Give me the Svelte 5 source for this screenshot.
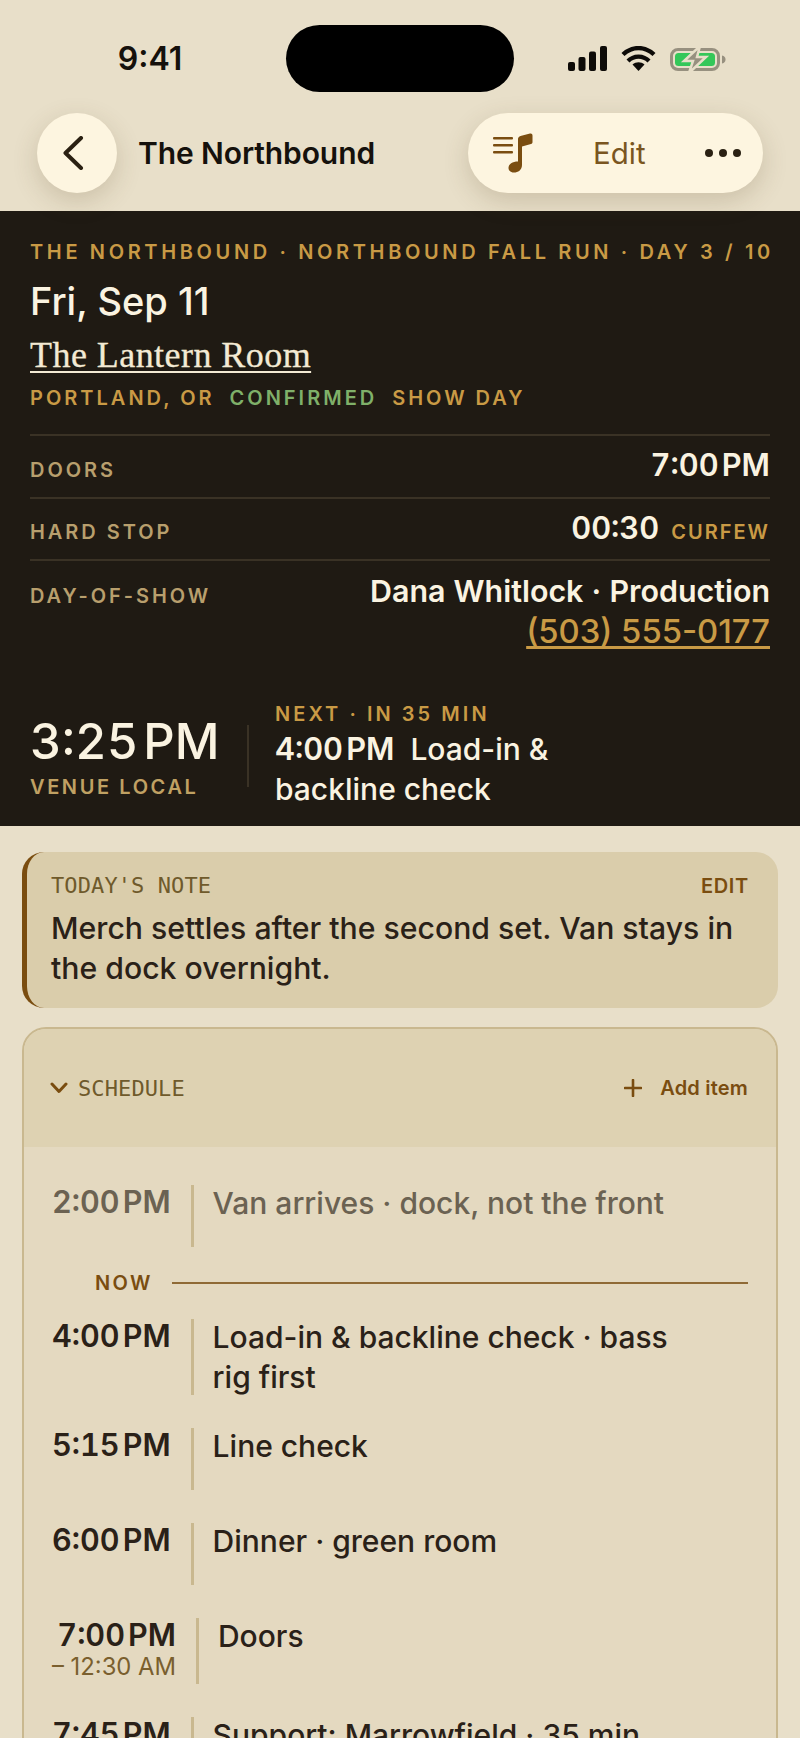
<script>
  const rows = [
    { t: '2:00', what: 'Van arrives · dock, not the front', past: true },
    { now: true },
    { t: '4:00', what: 'Load-in & backline check · bass rig first', two: true },
    { t: '5:15', what: 'Line check' },
    { t: '6:00', what: 'Dinner · green room' },
    { t: '7:00', what: 'Doors', sub: '– 12:30 AM' },
    { t: '7:45', what: 'Support: Marrowfield · 35 min' }
  ];
</script>

<div class="page">
  <header class="top">
    <div class="status">
      <div class="clock">9:41</div>
      <div class="island"></div>
      <div class="sys">
        <svg class="sig" width="39" height="25" viewBox="0 0 39 25"><rect x="0" y="16" width="7" height="9" rx="2"/><rect x="10.500" y="11" width="7" height="14" rx="2"/><rect x="21" y="5.500" width="7" height="19.500" rx="2"/><rect x="32" y="0" width="7" height="25" rx="2"/></svg>
        <svg class="wifi" width="35" height="25" viewBox="0 0 35 25"><path d="M17.500 25 L11.500 18.500 C15 15.500 20 15.500 23.500 18.500 Z"/><path d="M17.500 8.500 C12.500 8.500 8.500 10.500 5.500 13.500 L8.500 16.500 C13.500 11.500 21.500 11.500 26.500 16.500 L29.500 13.500 C26.500 10.500 22.500 8.500 17.500 8.500 Z"/><path d="M17.500 0 C10.800 0 4.800 2.700 0.500 7 L3.500 10 C11.500 2.400 23.500 2.400 31.500 10 L34.500 7 C30.200 2.700 24.200 0 17.500 0 Z"/></svg>
        <svg class="batt" width="56" height="27" viewBox="0 0 56 27"><rect x="1.500" y="3.500" width="47" height="20" rx="6.500" fill="none" stroke="#97907f" stroke-width="3"/><path d="M52 9.500 C54.500 10 55.500 11.500 55.500 13.500 C55.500 15.500 54.500 17 52 17.500 Z" fill="#97907f"/><rect x="5" y="7" width="40" height="13" rx="3.500" fill="#34c759"/><path d="M30 0 L14 15 H23 L19 27 L36 11 H27 Z" fill="#97907f" stroke="#e8dfc9" stroke-width="2.500"/></svg>
      </div>
    </div>
    <nav class="nav">
      <button class="round" aria-label="Back">
        <svg width="22" height="34" viewBox="0 0 22 34"><path d="M19 2 L3.500 17 L19 32" fill="none" stroke="#2a2012" stroke-width="4" stroke-linecap="round" stroke-linejoin="round"/></svg>
      </button>
      <div class="title">The Northbound</div>
      <div class="pill">
        <svg class="music" width="40" height="40" viewBox="0 0 40 40"><g fill="#7a4d10"><rect x="0" y="4" width="20" height="2.600" rx="1"/><rect x="0" y="11" width="20" height="2.600" rx="1"/><rect x="0" y="18" width="20" height="2.600" rx="1"/><path d="M25 6 C25 4.500 26 3.500 27.500 3 L37 0.500 C38.500 0.100 39.500 1 39.500 2.500 V9 C39.500 10 39 10.700 38 11 L29 13.500 V32 C29 37 25 39.500 21 39.500 C17 39.500 15.500 37 15.500 35 C15.500 31 19.500 28.500 25 28.500 Z"/></g></svg>
        <span class="edit">Edit</span>
        <span class="dots"><i></i><i></i><i></i></span>
      </div>
    </nav>
  </header>

  <section class="dark">
    <div class="eyebrow">THE NORTHBOUND · NORTHBOUND FALL RUN · DAY 3 / 10</div>
    <h1>Fri, Sep 11</h1>
    <div class="venue">The Lantern Room</div>
    <div class="meta"><span>PORTLAND, OR</span><span class="green">CONFIRMED</span><span>SHOW DAY</span></div>

    <div class="kv">
      <span class="k">DOORS</span>
      <span class="v">7:00<span class="ap">PM</span></span>
    </div>
    <div class="kv">
      <span class="k">HARD STOP</span>
      <span class="v">00:30<span class="cur">CURFEW</span></span>
    </div>
    <div class="kv last">
      <span class="k">DAY-OF-SHOW</span>
      <span class="contact"><span class="v">Dana Whitlock · Production</span><span class="phone">(503) 555-0177</span></span>
    </div>

    <div class="clockrow">
      <div class="local">
        <div class="big">3:25<span class="apb">PM</span></div>
        <div class="k2">VENUE LOCAL</div>
      </div>
      <div class="vr"></div>
      <div class="next">
        <div class="nlabel">NEXT · IN 35 MIN</div>
        <div class="ntext"><span class="nt">4:00<span class="ap">PM</span></span><span class="nsp"></span>Load-in &amp; backline check</div>
      </div>
    </div>
  </section>

  <main class="content">
    <section class="note">
      <div class="nhead"><span class="mono">TODAY'S NOTE</span><span class="nedit">EDIT</span></div>
      <p>Merch settles after the second set. Van stays in the dock overnight.</p>
    </section>

    <section class="sched">
      <div class="shead">
        <span class="sleft">
          <svg width="18" height="12" viewBox="0 0 18 12"><path d="M2 2 L9 9.500 L16 2" fill="none" stroke="#7a4d10" stroke-width="3" stroke-linecap="round" stroke-linejoin="round"/></svg>
          <span class="mono">SCHEDULE</span>
        </span>
        <span class="sright">
          <svg width="18" height="18" viewBox="0 0 18 18"><path d="M9 1 V17 M1 9 H17" stroke="#7a4d10" stroke-width="2.600" stroke-linecap="round"/></svg>
          <span>Add item</span>
        </span>
      </div>
      <div class="sbody">
        {#each rows as r}
          {#if r.now}
            <div class="nowrow"><span class="nowl">NOW</span><span class="nowline"></span></div>
          {:else}
            <div class="row" class:past={r.past}>
              <div class="when">
                <div class="tm">{r.t}<span class="ap">PM</span></div>
                {#if r.sub}<div class="sub">{r.sub}</div>{/if}
              </div>
              <div class="what" class:two={r.two} class:tall={r.sub}><span class="wt">{r.what}</span></div>
            </div>
          {/if}
        {/each}
      </div>
    </section>
  </main>
</div>

<style>
  :global(body) { margin: 0; background: #e8dfc9; }
  .page {
    width: 800px;
    height: 1738px;
    overflow: hidden;
    background: #e8dfc9;
    font-family: Inter, "Liberation Sans", sans-serif;
    color: #2a2118;
  }
  .top { height: 211px; box-sizing: border-box; }
  .status {
    display: grid;
    grid-template-columns: 286px 228px 1fr;
    padding-top: 25px;
    height: 88px;
  }
  .clock {
    font-size: 32px;
    font-weight: 600;
    line-height: 68px;
    text-align: center;
    padding-left: 14px;
    color: #15110c;
  }
  .island { height: 67px; background: #000; border-radius: 34px; }
  .sys { display: flex; align-items: flex-start; padding: 21px 0 0 54px; }
  .sig, .wifi { fill: #0d0b08; }
  .wifi { margin-left: 14px; }
  .batt { margin-left: 14px; }

  .nav { display: flex; align-items: center; padding-left: 37px; height: 80px; }
  .round {
    width: 80px; height: 80px;
    border: 0; border-radius: 50%;
    padding: 0;
    background: #fdf5e0;
    box-shadow: 0 8px 26px rgba(90, 70, 35, .2);
    display: flex; align-items: center; justify-content: center;
  }
  .round svg { margin-right: 8px; }
  .title { margin-left: 21px; font-size: 30px; font-weight: 600; color: #15110c; flex: 1; letter-spacing: -0.1px; }
  .pill {
    width: 295px; height: 80px;
    margin-right: 37px;
    border-radius: 40px;
    background: #fdf5e0;
    box-shadow: 0 8px 26px rgba(90, 70, 35, .2);
    display: flex; align-items: center;
    box-sizing: border-box;
    padding-left: 25px;
  }
  .edit { margin-left: 60px; font-size: 29.500px; color: #7a5520; font-weight: 400; }
  .dots { margin-left: 59px; display: flex; gap: 6px; }
  .dots i { width: 8px; height: 8px; border-radius: 50%; background: #2a2012; display: block; }

  .dark { background: #1f1a13; height: 615px; box-sizing: border-box; padding: 29px 30px 0; }
  .eyebrow {
    font-size: 20px; font-weight: 600; line-height: 24px;
    letter-spacing: 3.640px; color: #c99a45; white-space: nowrap;
  }
  h1 { margin: 14px 0 0; font-size: 38px; font-weight: 500; line-height: 46px; color: #faf3e1; }
  .venue {
    margin-top: 11px;
    font-family: "Liberation Serif", serif;
    font-size: 36px; line-height: 40px; letter-spacing: 0.450px; color: #f3ead4;
    text-decoration: underline; text-decoration-thickness: 2px; text-underline-offset: 4px;
    font-weight: 400;
    -webkit-text-stroke: 0.3px #f3ead4;
  }
  .meta {
    display: flex; gap: 15px; margin-top: 11px;
    font-size: 20px; font-weight: 600; line-height: 24px; letter-spacing: 3px; color: #c99a45;
  }
  .green { color: #7fb069; }
  .kv {
    border-top: 2px solid #3a3225;
    height: 62.500px; box-sizing: border-box;
    display: flex; justify-content: space-between; align-items: center;
  }
  .meta + .kv { margin-top: 24px; }
  .k { font-size: 20px; font-weight: 600; letter-spacing: 2.950px; color: #b89f6d; padding-top: 7px; }
  .v { font-size: 30.800px; font-weight: 600; color: #faf3e1; padding-bottom: 3px; font-variant-numeric: tabular-nums; }
  .ap { margin-left: 0.1em; }
  .cur { font-size: 20px; letter-spacing: 2px; color: #c99a45; margin-left: 12px; }
  .kv.last { height: auto; align-items: flex-start; padding-top: 10px; }
  .kv.last .k { padding-top: 13px; }
  .contact { display: flex; flex-direction: column; align-items: flex-end; }
  .contact .v { line-height: 40px; font-size: 30.400px; padding: 0; }
  .phone { font-size: 32.800px; font-weight: 500; line-height: 41px; color: #c99a45; text-decoration: underline; text-decoration-thickness: 3px; text-underline-offset: 3px; }

  .clockrow { display: flex; align-items: center; margin-top: 50px; }
  .local { width: 217px; }
  .big { font-size: 49px; font-weight: 500; line-height: 60px; color: #faf3e1; white-space: nowrap; font-variant-numeric: tabular-nums; }
  .apb { margin-left: 0.1em; }
  .k2 { margin-top: 3px; font-size: 20px; font-weight: 600; line-height: 24px; letter-spacing: 2.600px; color: #c0a163; }
  .vr { width: 2px; height: 62px; background: #3a3225; }
  .next { margin-left: 26px; }
  .nlabel { font-size: 20px; font-weight: 600; line-height: 24px; letter-spacing: 3.050px; color: #c99a45; }
  .ntext { margin-top: 3px; width: 340px; font-size: 30px; font-weight: 500; line-height: 40px; color: #faf3e1; }
  .nt { font-size: 30.800px; font-weight: 600; font-variant-numeric: tabular-nums; }
  .nsp { display: inline-block; width: 16px; }

  .content { padding: 26px 22px 0; }
  .note {
    height: 156px; box-sizing: border-box;
    background: #dacdab;
    border-left: 5px solid #7a4d10;
    border-radius: 22px;
    padding: 22px 29px 0 24px;
  }
  .nhead { display: flex; justify-content: space-between; align-items: center; line-height: 24px; }
  .mono { font-family: "DejaVu Sans Mono", monospace; font-size: 22px; color: #6f5a2b; letter-spacing: 0.100px; }
  .nedit { font-size: 20px; font-weight: 600; letter-spacing: 0.700px; color: #7a4d10; }
  .note p { margin: 10px 0 0; font-size: 30.200px; font-weight: 500; line-height: 40px; color: #2a2118; }

  .sched {
    margin-top: 19px;
    border: 2px solid #c9b88f;
    border-radius: 24px;
    background: #e4d9c0;
    overflow: hidden;
  }
  .shead {
    height: 118px;
    background: #ded2b2;
    display: flex; align-items: center; justify-content: space-between;
    padding: 0 28px 0 26px;
  }
  .sleft { display: flex; align-items: center; gap: 10px; }
  .sright { display: flex; align-items: center; gap: 18px; font-size: 20px; font-weight: 600; letter-spacing: 0.200px; color: #7a4d10; }
  .sbody { padding: 38px 28px 60px; }
  .row { display: flex; margin-bottom: 33px; }
  .when { min-width: 118px; text-align: right; flex: none; }
  .tm { font-size: 30.600px; font-weight: 600; line-height: 40px; margin-top: -3px; white-space: nowrap; color: #2a2118; font-variant-numeric: tabular-nums; }
  .sub { font-size: 23.800px; line-height: 24px; color: #7a5f2e; white-space: nowrap; }
  .what {
    margin-left: 20px;
    border-left: 3px solid #c9b88f;
    padding-left: 19px;
    width: 480px;
    min-height: 62px;
    box-sizing: border-box;
    font-size: 30px; font-weight: 500; line-height: 40px;
    color: #2a2118;
  }
  .wt { display: block; margin-top: -2px; }
  .what.two { height: 76px; min-height: 76px; }
  .what.tall { min-height: 66px; }
  .past .tm, .past .what { color: #6b6252; }
  .nowrow { display: flex; align-items: center; margin: -9px 0 24px; height: 24px; }
  .nowl { margin-left: 43px; font-size: 20px; font-weight: 600; letter-spacing: 2.400px; color: #7a4d10; }
  .nowline { flex: 1; height: 2px; background: #8f6a35; margin-left: 19px; }
</style>
